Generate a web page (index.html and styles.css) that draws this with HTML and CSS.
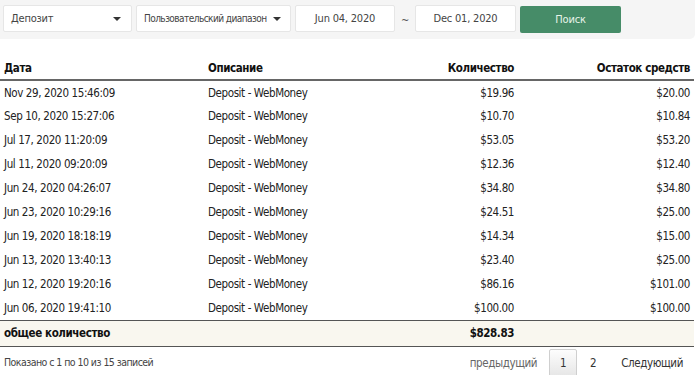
FILE: index.html
```html
<!DOCTYPE html>
<html lang="ru">
<head>
<meta charset="utf-8">
<link rel="stylesheet" href="styles.css">
</head>
<body>
<div class="filters">
  <div class="select s1"><span class="label">Депозит</span><i class="caret"></i></div>
  <div class="select s2"><span class="label">Пользовательский диапазон</span><i class="caret"></i></div>
  <div class="date d1">Jun 04, 2020</div>
  <span class="tilde">~</span>
  <div class="date d2">Dec 01, 2020</div>
  <button class="search">Поиск</button>
</div>
<table class="tx">
  <colgroup><col class="c1"><col class="c2"><col class="c3"><col class="c4"></colgroup>
  <thead>
    <tr><th>Дата</th><th>Описание</th><th class="r">Количество</th><th class="r">Остаток средств</th></tr>
  </thead>
  <tbody>
    <tr><td>Nov 29, 2020 15:46:09</td><td>Deposit - WebMoney</td><td class="r">$19.96</td><td class="r">$20.00</td></tr>
    <tr><td>Sep 10, 2020 15:27:06</td><td>Deposit - WebMoney</td><td class="r">$10.70</td><td class="r">$10.84</td></tr>
    <tr><td>Jul 17, 2020 11:20:09</td><td>Deposit - WebMoney</td><td class="r">$53.05</td><td class="r">$53.20</td></tr>
    <tr><td>Jul 11, 2020 09:20:09</td><td>Deposit - WebMoney</td><td class="r">$12.36</td><td class="r">$12.40</td></tr>
    <tr><td>Jun 24, 2020 04:26:07</td><td>Deposit - WebMoney</td><td class="r">$34.80</td><td class="r">$34.80</td></tr>
    <tr><td>Jun 23, 2020 10:29:16</td><td>Deposit - WebMoney</td><td class="r">$24.51</td><td class="r">$25.00</td></tr>
    <tr><td>Jun 19, 2020 18:18:19</td><td>Deposit - WebMoney</td><td class="r">$14.34</td><td class="r">$15.00</td></tr>
    <tr><td>Jun 13, 2020 13:40:13</td><td>Deposit - WebMoney</td><td class="r">$23.40</td><td class="r">$25.00</td></tr>
    <tr><td>Jun 12, 2020 19:20:16</td><td>Deposit - WebMoney</td><td class="r">$86.16</td><td class="r">$101.00</td></tr>
    <tr><td>Jun 06, 2020 19:41:10</td><td>Deposit - WebMoney</td><td class="r">$100.00</td><td class="r">$100.00</td></tr>
  </tbody>
  <tfoot>
    <tr><td>общее количество</td><td></td><td class="r">$828.83</td><td></td></tr>
  </tfoot>
</table>
<div class="footer">
  <div class="info">Показано с 1 по 10 из 15 записей</div>
  <div class="pager">
    <span class="prev">предыдущий</span>
    <span class="page current">1</span>
    <span class="page">2</span>
    <span class="next">Следующий</span>
  </div>
</div>
</body>
</html>
```
FILE: styles.css
```css
html, body { margin: 0; padding: 0; background: #fff; }
body {
  font-family: "DejaVu Sans Condensed", "DejaVu Sans", sans-serif;
  font-size: 11.5px;
  letter-spacing: -0.4px;
  color: #222;
  width: 700px;
  height: 375px;
  overflow: hidden;
}
.filters {
  width: 695px;
  height: 39px;
  box-sizing: border-box;
  background: #f5f5f5;
  border-bottom-right-radius: 5px;
  display: flex;
  align-items: flex-start;
  gap: 4px;
  padding: 5px 0 0 3px;
}
.select, .date {
  height: 27px;
  box-sizing: border-box;
  background: #fff;
  border: 1px solid #e6e6e6;
  border-radius: 2px;
  color: #444;
  font-size: 11px;
  letter-spacing: -0.2px;
  display: flex;
  align-items: center;
}
.select { padding: 0 10px 0 7px; justify-content: space-between; }
.label { white-space: nowrap; }
.s1 { width: 129px; }
.s2 { width: 155px; padding-right: 9px; }
.s2 .label { font-size: 10px; letter-spacing: -0.55px; }
.caret {
  flex: none;
  width: 0; height: 0;
  border-left: 4px solid transparent;
  border-right: 4px solid transparent;
  border-top: 4px solid #333;
}
.date { justify-content: center; }
.d1 { width: 100px; }
.d2 { width: 101px; }
.tilde {
  width: 12px;
  text-align: center;
  color: #555;
  font-size: 11px;
  line-height: 27px;
  margin-top: 2px;
}
.search {
  margin-top: 1px;
  width: 101px;
  height: 27px;
  border: none;
  border-radius: 2px;
  background: #468c68;
  color: #e8f4ea;
  font-family: inherit;
  font-size: 11px;
  letter-spacing: -0.2px;
  cursor: pointer;
}
.tx {
  margin-top: 17px;
  width: 694px;
  border-collapse: collapse;
  table-layout: fixed;
}
.c1 { width: 204px; }
.c2 { width: 170px; }
.c3 { width: 144px; }
.c4 { width: 176px; }
.tx th, .tx td {
  padding: 0 4px;
  height: 24px;
  white-space: nowrap;
  text-align: left;
  box-sizing: border-box;
}
.tx th {
  font-weight: bold;
  color: #111;
  border-bottom: 2px solid #666;
}
.tx .r { text-align: right; }
.tx tbody td { color: #222; }
.tx tfoot td {
  background: #f9f7ef;
  font-weight: bold;
  color: #111;
  height: 26px;
  border-top: 1px solid #555;
  border-bottom: 1px solid #555;
}
.footer {
  width: 694px;
  display: flex;
  justify-content: space-between;
  align-items: center;
  height: 29px;
}
.info {
  font-size: 10.5px;
  letter-spacing: -0.55px;
  color: #444;
  padding-left: 4px;
  padding-top: 2px;
}
.pager { display: flex; align-items: center; padding-top: 4px; }
.prev { color: #666; margin-right: 12px; }
.page {
  width: 28px;
  height: 28px;
  box-sizing: border-box;
  display: flex;
  align-items: center;
  justify-content: center;
  color: #333;
  border: 1px solid transparent;
  border-radius: 2px;
}
.page.current {
  border-color: #cfcfcf;
  background: linear-gradient(#fdfdfd, #e6e6e6);
  margin-right: 2px;
}
.next { color: #333; margin-left: 14px; margin-right: 11px; }
```
